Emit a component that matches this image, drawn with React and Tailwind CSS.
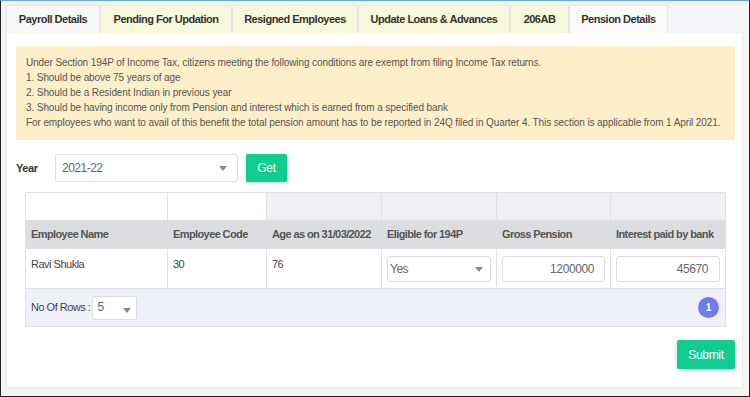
import React from "react";

const Caret = () => (
  <svg width="8" height="5" viewBox="0 0 8 5" className="shrink-0">
    <path d="M0 0 L8 0 L4 5 Z" fill="#888" />
  </svg>
);

export default function App() {
  const tabs = [
    { label: "Payroll Details", w: "w-[94px]", bg: "bg-[#f8f8f8]" },
    { label: "Pending For Updation", w: "w-[132px]", bg: "bg-[#f8f9dc]" },
    { label: "Resigned Employees", w: "w-[126px]", bg: "bg-[#f8f9dc]" },
    { label: "Update Loans & Advances", w: "w-[152px]", bg: "bg-[#f8f9dc]" },
    { label: "206AB", w: "w-[59px]", bg: "bg-[#f8f9dc]" },
    { label: "Pension Details", w: "w-[99px]", bg: "bg-[#fafafa]" },
  ];
  const heads = [
    ["Employee Name", "w-[142px]"],
    ["Employee Code", "w-[99px]"],
    ["Age as on 31/03/2022", "w-[115px]"],
    ["Eligible for 194P", "w-[115px]"],
    ["Gross Pension", "w-[114px]"],
    ["Interest paid by bank", "w-[115px]"],
  ];
  return (
    <div className="w-[750px] h-[397px] bg-[#f3f4f8] border-t border-t-[#6aa6d8] border-x border-b border-x-[#222] border-b-[#222] overflow-hidden font-['Liberation_Sans',Arial,sans-serif] text-[#444]">
      <div className="flex pl-[5px] pt-[4px] h-[32px]">
        {tabs.map((t) => (
          <div
            key={t.label}
            className={`${t.w} ${t.bg} h-[28px] border border-[#e4e4e4] border-b-0 flex items-center justify-center text-[11px] tracking-[-0.5px] whitespace-nowrap font-bold text-[#333] rounded-t-[2px]`}
          >
            {t.label}
          </div>
        ))}
      </div>
      <div className="ml-[5px] w-[737px] h-[355px] bg-white rounded-b-[3px] border border-[#e8e9ee] border-t-0 flex flex-col">
        <div className="ml-[9px] mt-[13px] w-[719px] h-[94px] bg-[#fdefc9] pl-[10px] pt-[9px] text-[10px] tracking-[-0.1px] leading-[15px] text-[#555] whitespace-nowrap">
          <div>Under Section 194P of Income Tax, citizens meeting the following conditions are exempt from filing Income Tax returns.</div>
          <div>1. Should be above 75 years of age</div>
          <div>2. Should be a Resident Indian in previous year</div>
          <div>3. Should be having income only from Pension and interest which is earned from a specified bank</div>
          <div>For employees who want to avail of this benefit the total pension amount has to be reported in 24Q filed in Quarter 4. This section is applicable from 1 April 2021.</div>
        </div>
        <div className="flex items-center ml-[9px] mt-[14px] h-[28px]">
          <div className="w-[39px] text-[11px] tracking-[-0.4px] font-bold text-[#333]">Year</div>
          <div className="w-[183px] h-[28px] border border-[#ddd] rounded-[3px] flex items-center justify-between pl-[6px] pr-[10px] text-[12px] tracking-[-0.5px] text-[#666]">
            <span>2021-22</span>
            <Caret />
          </div>
          <div className="ml-[8px] w-[41px] h-[28px] bg-[#0fcd90] rounded-[2px] shadow-[0_1px_3px_rgba(0,0,0,0.2)] flex items-center justify-center text-white text-[12px] tracking-[-0.3px]">
            Get
          </div>
        </div>
        <div className="ml-[18px] mt-[10px] w-[701px] border border-[#dfe1e6] text-[11px]">
          <div className="flex h-[28px] border-b border-[#dfe1e6] bg-[#eef0f4]">
            {heads.map((h, i) => (
              <div
                key={i}
                className={`${h[1]} shrink-0 h-full ${i < 5 ? "border-r border-[#dfe1e6]" : ""} ${i < 2 ? "bg-white" : ""}`}
              />
            ))}
          </div>
          <div className="flex h-[28px] bg-[#dcdde1] border-b border-[#dfe1e6]">
            {heads.map((h, i) => (
              <div
                key={i}
                className={`${h[1]} shrink-0 h-full flex items-center pl-[5px] font-bold text-[#555] tracking-[-0.6px] whitespace-nowrap`}
              >
                {h[0]}
              </div>
            ))}
          </div>
          <div className="flex h-[40px] border-b border-[#dfe1e6] bg-white text-[#444] tracking-[-0.5px]">
            <div className="w-[142px] shrink-0 h-full border-r border-[#dfe1e6] pl-[5px] pt-[7px]">Ravi Shukla</div>
            <div className="w-[99px] shrink-0 h-full border-r border-[#dfe1e6] pl-[5px] pt-[7px]">30</div>
            <div className="w-[115px] shrink-0 h-full border-r border-[#dfe1e6] pl-[5px] pt-[7px]">76</div>
            <div className="w-[115px] shrink-0 h-full border-r border-[#dfe1e6] pl-[5px] pt-[7px]">
              <div className="w-[104px] h-[26px] border border-[#ddd] rounded-[3px] flex items-center justify-between pl-[2px] pr-[7px] text-[12px] text-[#666]">
                <span>Yes</span>
                <Caret />
              </div>
            </div>
            <div className="w-[114px] shrink-0 h-full border-r border-[#dfe1e6] pl-[5px] pt-[7px]">
              <div className="w-[103px] h-[26px] border border-[#ddd] rounded-[3px] flex items-center justify-end pr-[10px] text-[12px] tracking-[-0.4px] text-[#666]">
                1200000
              </div>
            </div>
            <div className="w-[115px] shrink-0 h-full pl-[5px] pt-[7px]">
              <div className="w-[104px] h-[26px] border border-[#ddd] rounded-[3px] flex items-center justify-end pr-[11px] text-[12px] tracking-[-0.4px] text-[#666]">
                45670
              </div>
            </div>
          </div>
          <div className="flex items-center justify-between h-[37px] bg-[#eef1f8] pl-[5px] pr-[6px]">
            <div className="flex items-center">
              <span className="text-[#444] tracking-[-0.5px]">No Of Rows :</span>
              <div className="ml-[2px] w-[45px] h-[24px] bg-white border border-[#ddd] rounded-[3px] flex items-center justify-between pl-[4px] pr-[5px] text-[12px] text-[#666]">
                <span className="-mt-[2px]">5</span>
                <span className="mt-[5px]"><Caret /></span>
              </div>
            </div>
            <div className="w-[21px] h-[21px] rounded-full bg-[#6f7cf1] text-white text-[10px] font-bold flex items-center justify-center">
              1
            </div>
          </div>
        </div>
        <div className="flex justify-end mt-[13px] mr-[7px]">
          <div className="w-[58px] h-[29px] bg-[#0fcd90] rounded-[2px] shadow-[0_1px_4px_rgba(0,0,0,0.2)] flex items-center justify-center text-white text-[12px] tracking-[-0.3px]">
            Submit
          </div>
        </div>
      </div>
    </div>
  );
}
